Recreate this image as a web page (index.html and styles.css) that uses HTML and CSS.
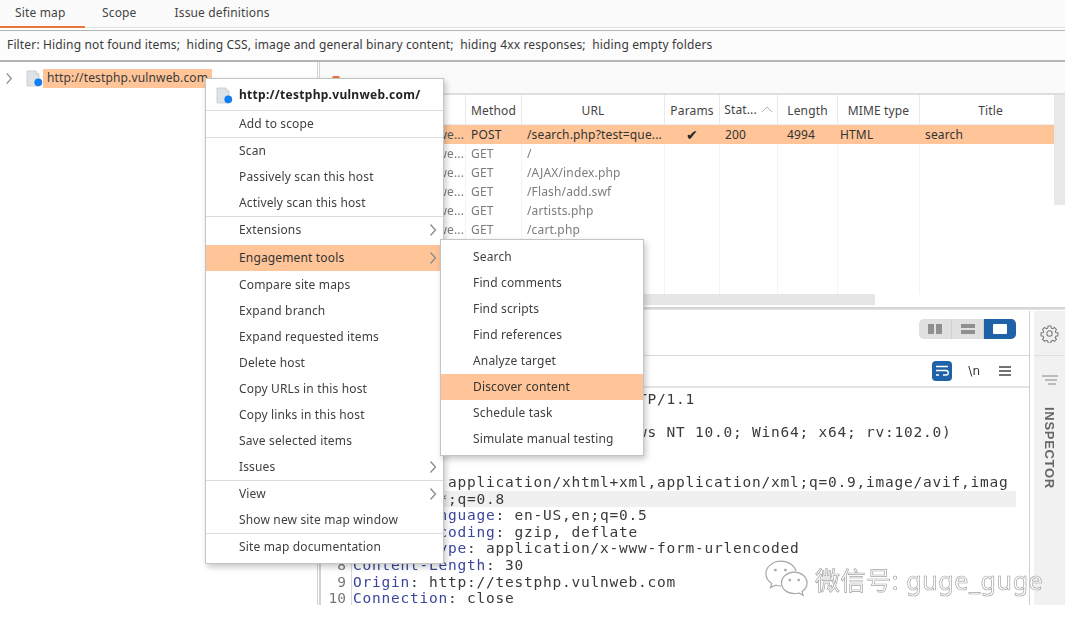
FILE: index.html
```html
<!DOCTYPE html>
<html lang="en">
<head>
<meta charset="utf-8">
<title>Site map</title>
<link rel="stylesheet" href="styles.css">
</head>
<body>
<svg class="defs" width="0" height="0" aria-hidden="true">
  <symbol id="site" viewBox="0 0 17 17">
    <path d="M1 1h9l3 3v12H1z" fill="#dfe3e6" stroke="#c4c8cc" stroke-width=".8"/>
    <path d="M10 1v3h3" fill="#f5f6f7" stroke="#c4c8cc" stroke-width=".8"/>
    <circle cx="12.3" cy="12.3" r="3.9" fill="#0f7ff2"/>
  </symbol>
  <symbol id="chev" viewBox="0 0 8 14">
    <path d="M1.5 1.5 6.5 7l-5 5.5" fill="none" stroke="#8a8a8a" stroke-width="1.3"/>
  </symbol>
</svg>
<div class="app">
  <nav class="tabs">
    <span class="tab active">Site map</span>
    <span class="tab">Scope</span>
    <span class="tab">Issue definitions</span>
  </nav>
  <div class="filter">Filter: Hiding not found items;&nbsp; hiding CSS, image and general binary content;&nbsp; hiding 4xx responses;&nbsp; hiding empty folders</div>
  <div class="main">
    <aside class="tree">
      <div class="tree-row">
        <svg class="tree-chev"><use href="#chev"/></svg>
        <svg class="site-icon"><use href="#site"/></svg>
        <span class="tree-label">http://testphp.vulnweb.com</span>
      </div>
    </aside>
    <section class="right">
      <div class="upper">
        <div class="subtabs"><span class="subtab-mark"></span></div>
        <div class="table-wrap">
          <div class="table">
            <div class="row head">
              <span class="th">Host</span><span class="th">Method</span><span class="th">URL</span><span class="th">Params</span>
              <span class="th th-sort">Stat...<svg class="sort" viewBox="0 0 12 7"><path d="M1 6l5-5 5 5" fill="none" stroke="#b5b5b5"/></svg></span>
              <span class="th">Length</span><span class="th">MIME type</span><span class="th">Title</span>
            </div>
            <div class="row sel"><span class="td host">http://testphp.vulnwe...</span><span class="td">POST</span><span class="td">/search.php?test=que...</span><span class="td check">✔</span><span class="td">200</span><span class="td">4994</span><span class="td">HTML</span><span class="td">search</span></div>
            <div class="row"><span class="td host">http://testphp.vulnwe...</span><span class="td">GET</span><span class="td">/</span><span class="td"></span><span class="td"></span><span class="td"></span><span class="td"></span><span class="td"></span></div>
            <div class="row"><span class="td host">http://testphp.vulnwe...</span><span class="td">GET</span><span class="td">/AJAX/index.php</span><span class="td"></span><span class="td"></span><span class="td"></span><span class="td"></span><span class="td"></span></div>
            <div class="row"><span class="td host">http://testphp.vulnwe...</span><span class="td">GET</span><span class="td">/Flash/add.swf</span><span class="td"></span><span class="td"></span><span class="td"></span><span class="td"></span><span class="td"></span></div>
            <div class="row"><span class="td host">http://testphp.vulnwe...</span><span class="td">GET</span><span class="td">/artists.php</span><span class="td"></span><span class="td"></span><span class="td"></span><span class="td"></span><span class="td"></span></div>
            <div class="row"><span class="td host">http://testphp.vulnwe...</span><span class="td">GET</span><span class="td">/cart.php</span><span class="td"></span><span class="td"></span><span class="td"></span><span class="td"></span><span class="td"></span></div>
            <div class="row filler"><span class="td"></span><span class="td"></span><span class="td"></span><span class="td"></span><span class="td"></span><span class="td"></span><span class="td"></span><span class="td"></span></div>
          </div>
          <div class="vscroll"><div class="vthumb"></div></div>
        </div>
        <div class="hscroll"><div class="hthumb"></div></div>
      </div>
      <div class="lower">
        <div class="editor">
          <div class="bar bar-top">
            <div class="layout-toggle">
              <span class="seg"><svg viewBox="0 0 14 10"><path d="M0 0h6v10H0zM8 0h6v10H8z" fill="#8f8f8f"/></svg></span>
              <span class="seg"><svg viewBox="0 0 14 10"><path d="M0 0h14v4H0zM0 6h14v4H0z" fill="#8f8f8f"/></svg></span>
              <span class="seg seg-on"><svg viewBox="0 0 14 10"><rect width="14" height="10" rx="1" fill="#fff"/></svg></span>
            </div>
          </div>
          <div class="bar bar-sub">
            <span class="wrap-btn"><svg viewBox="0 0 14 12"><path d="M1 1.500h12M1 5.500h10a2 2 0 0 1 0 4.500H8M1 10h3" fill="none" stroke="#fff" stroke-width="1.400"/></svg></span>
            <span class="nl">\n</span>
            <svg class="burger" viewBox="0 0 12 10"><path d="M0 1h12M0 5h12M0 9h12" stroke="#444" stroke-width="1.400"/></svg>
          </div>
          <div class="code">
            <div class="ln"><span class="no">1</span><span class="tx">POST /search.php?test=query HTTP/1.1</span></div>
            <div class="ln"><span class="no">2</span><span class="tx"><b>Host</b>: testphp.vulnweb.com</span></div>
            <div class="ln"><span class="no">3</span><span class="tx"><b>User-Agent</b>: Mozilla/5.0 (Windows NT 10.0; Win64; x64; rv:102.0)
Gecko/20100101 Firefox/102.0</span></div>
            <div class="ln"><span class="no">4</span><span class="tx"><b>Accept</b>:
text/html,application/xhtml+xml,application/xml;q=0.9,image/avif,imag
<i>e/webp,*/*;q=0.8</i></span></div>
            <div class="ln"><span class="no">5</span><span class="tx"><b>Accept-Language</b>: en-US,en;q=0.5</span></div>
            <div class="ln"><span class="no">6</span><span class="tx"><b>Accept-Encoding</b>: gzip, deflate</span></div>
            <div class="ln"><span class="no">7</span><span class="tx"><b>Content-Type</b>: application/x-www-form-urlencoded</span></div>
            <div class="ln"><span class="no">8</span><span class="tx"><b>Content-Length</b>: 30</span></div>
            <div class="ln"><span class="no">9</span><span class="tx"><b>Origin</b>: http://testphp.vulnweb.com</span></div>
            <div class="ln"><span class="no">10</span><span class="tx"><b>Connection</b>: close</span></div>
          </div>
        </div>
        <aside class="rail">
          <div class="rail-gear">
            <svg viewBox="0 0 24 24"><path d="M12 8.600a3.400 3.400 0 1 0 0 6.800 3.400 3.400 0 0 0 0-6.800zM10.200 2.500h3.600l.5 2.700 1.700.7 2.300-1.500 2.500 2.500-1.500 2.300.7 1.700 2.700.5v3.600l-2.700.5-.7 1.700 1.500 2.300-2.500 2.500-2.300-1.500-1.700.7-.5 2.700h-3.600l-.5-2.700-1.700-.7-2.300 1.500-2.500-2.500 1.500-2.300-.7-1.700-2.700-.5v-3.600l2.700-.5.7-1.700-1.500-2.300 2.500-2.500 2.300 1.500 1.700-.7z" fill="none" stroke="#777" stroke-width="1.300"/></svg>
          </div>
          <div class="rail-body">
            <svg class="rail-filter" viewBox="0 0 16 10"><path d="M0 1h16M3 5h12M6 9h8" stroke="#888" stroke-width="1.200"/></svg>
            <span class="rail-label">INSPECTOR</span>
          </div>
        </aside>
      </div>
    </section>
  </div>
</div>

<div class="menu menu-main">
  <div class="mi mi-title"><svg class="site-icon"><use href="#site"/></svg><b>http://testphp.vulnweb.com/</b></div>
  <div class="mi sep">Add to scope</div>
  <div class="mi">Scan</div>
  <div class="mi">Passively scan this host</div>
  <div class="mi sep">Actively scan this host</div>
  <div class="mi sub">Extensions<svg class="mi-chev"><use href="#chev"/></svg></div>
  <div class="mi hot gap sub">Engagement tools<svg class="mi-chev"><use href="#chev"/></svg></div>
  <div class="mi">Compare site maps</div>
  <div class="mi">Expand branch</div>
  <div class="mi">Expand requested items</div>
  <div class="mi">Delete host</div>
  <div class="mi">Copy URLs in this host</div>
  <div class="mi">Copy links in this host</div>
  <div class="mi">Save selected items</div>
  <div class="mi sep sub">Issues<svg class="mi-chev"><use href="#chev"/></svg></div>
  <div class="mi sub">View<svg class="mi-chev"><use href="#chev"/></svg></div>
  <div class="mi sep">Show new site map window</div>
  <div class="mi">Site map documentation</div>
</div>

<div class="menu menu-sub">
  <div class="mi">Search</div>
  <div class="mi">Find comments</div>
  <div class="mi">Find scripts</div>
  <div class="mi">Find references</div>
  <div class="mi">Analyze target</div>
  <div class="mi hot">Discover content</div>
  <div class="mi">Schedule task</div>
  <div class="mi">Simulate manual testing</div>
</div>

<div class="watermark">
  <svg class="wm-icon" viewBox="0 0 40 36"><path d="M15 2C7.500 2 1.500 7 1.500 13.200c0 3.600 2 6.700 5.200 8.800L5.500 26l4.600-2.400c1.500.4 3 .7 4.900.7M38.500 21.500c0-5.400-5.200-9.700-11.500-9.700s-11.500 4.300-11.500 9.700 5.200 9.700 11.500 9.700c1.400 0 2.800-.2 4-.6l4 2.100-1-3.500c2.700-1.800 4.500-4.600 4.500-7.700zM28.500 11C27.500 6 22 2 15 2" fill="none" stroke="#a9a9a9" stroke-width="1.100"/><circle cx="10" cy="10" r="1.300" fill="#a9a9a9"/><circle cx="19" cy="10" r="1.300" fill="#a9a9a9"/><circle cx="23" cy="19" r="1.200" fill="#a9a9a9"/><circle cx="31" cy="19" r="1.200" fill="#a9a9a9"/></svg>
  <span class="wm-text">微信号: guge_guge</span>
</div>
</body>
</html>
```
FILE: styles.css
```css
* { box-sizing: border-box; }
html, body { margin: 0; height: 100%; background: #fff; overflow: hidden; }
body { font-family: "Noto Sans", "Open Sans", sans-serif; font-size: 12px; color: #3a3a3a; letter-spacing: .15px; }
.defs { position: absolute; }
.app { width: 1065px; height: 605px; display: flex; flex-direction: column; filter: blur(.4px); }

.tabs { height: 28px; display: flex; border-bottom: 1px solid #e2e2e2; background: #fbfbfb; }
.tab { padding: 4px 17px 0 15px; height: 28px; line-height: 17px; color: #444; }
.tab:nth-child(2) { padding-left: 17px; padding-right: 23px; }
.tab.active { width: 85px; border-bottom: 2px solid #e9743c; }

.filter { margin-top: 2px; height: 32px; line-height: 28px; padding-left: 7px; border: solid #b4b4b4; border-width: 1px 0 2px; background: #fcfcfc; color: #3a3a3a; }

.main { flex: 1; display: flex; min-height: 0; }
.tree { width: 320px; border-right: 3px double #d2d2d2; padding-top: 7px; }
.tree-row { height: 19px; display: flex; align-items: center; }
.tree-chev { width: 8px; height: 13px; margin-left: 5px; }
.site-icon { width: 17px; height: 17px; flex: none; }
.tree-row .site-icon { margin-left: 13px; }
.tree-label { padding: 0 6px 0 4px; height: 19px; line-height: 18px; width: 169px; background: #ffc598; white-space: nowrap; }

.right { flex: 1; display: flex; flex-direction: column; min-width: 0; }
.upper { height: 247px; display: flex; flex-direction: column; border-bottom: 2px solid #d6d6d6; }
.subtabs { height: 33px; flex: none; background: #fafafa; border-bottom: 2px solid #dedede; position: relative; }
.subtab-mark { position: absolute; left: 12px; top: 14px; width: 8px; height: 3px; background: #e9743c; border-radius: 2px 2px 0 0; }
.table-wrap { height: 199px; flex: none; display: flex; }
.table { flex: 1; min-width: 0; overflow: hidden; }
.row { display: grid; grid-template-columns: 146px 56px 143px 55px 58px 60px 82px 142px; width: 742px; height: 19px; line-height: 20px; color: #7c7c7c; }
.head { height: 30px; line-height: 31px; color: #444; background: #fff; border-bottom: 1px solid #ececec; }
.th { text-align: center; border-right: 1px solid #e9e9e9; white-space: nowrap; overflow: hidden; }
.th-sort { display: flex; align-items: center; justify-content: center; gap: 4px; }
.sort { width: 12px; height: 7px; }
.td { padding-left: 5px; border-right: 1px solid #f4f4f4; white-space: nowrap; overflow: hidden; }
.td:nth-child(6) { padding-left: 9px; }
.td:nth-child(7) { padding-left: 2px; }
.host { text-align: right; padding-right: 1px; }
.sel { background: #ffc598; color: #333; }
.sel .td { border-right-color: transparent; }
.sel .host { color: #555; }
.td.check { text-align: center; font-family: "DejaVu Sans", sans-serif; font-size: 14px; color: #222; padding: 0; }
.filler { height: 60px; }
.vscroll { width: 11px; flex: none; background: #fff; }
.vthumb { height: 110px; background: #e8e8e8; }
.hscroll { flex: none; height: 12px; background: #fff; padding-left: 120px; }
.hthumb { width: 435px; height: 11px; background: #e6e6e6; }

.lower { flex: 1; display: flex; min-height: 0; border-top: 1px solid #e3e3e3; }
.editor { flex: 1; min-width: 0; display: flex; flex-direction: column; border-left: 1px solid #d4d4d4; }
.bar { display: flex; align-items: center; justify-content: flex-end; flex: none; }
.bar-top { height: 46px; border-bottom: 1px solid #d9d9d9; padding: 0 13px 7px 0; }
.layout-toggle { display: flex; height: 20px; width: 97px; border-radius: 5px; overflow: hidden; background: #e0e0e0; }
.seg { flex: 1; display: flex; align-items: center; justify-content: center; border-right: 1px solid #d2d2d2; }
.seg svg { width: 14px; height: 10px; }
.seg-on { background: #1f62a8; border: 0; }
.bar-sub { height: 32px; border-bottom: 2px solid #e4e4e4; padding: 0 18px 0 0; }
.wrap-btn { width: 20px; height: 20px; background: #1f62a8; border-radius: 4px; display: flex; align-items: center; justify-content: center; }
.wrap-btn svg { width: 14px; height: 12px; }
.nl { margin-left: 16px; font-family: "DejaVu Sans", sans-serif; font-size: 12px; color: #333; font-weight: 500; letter-spacing: 0; }
.burger { width: 12px; height: 10px; margin-left: 19px; }

.code { flex: 1; overflow: hidden; font-family: "DejaVu Sans Mono", monospace; font-size: 14.5px; line-height: 16.6px; letter-spacing: .77px; color: #3a3a3a; padding-top: 3px; }
.ln { display: flex; }
.no { width: 25px; flex: none; text-align: right; color: #777; letter-spacing: 0; }
.tx { margin-left: 5px; padding-left: 1px; border-left: 1px solid #d8d8d8; white-space: pre; flex: 1; }
.tx b { font-weight: 400; color: #3a479c; }
.tx i { font-style: normal; display: inline-block; width: 663px; background: #f0f0f0; }

.rail { width: 36px; flex: none; margin-top: 1px; padding-left: 4px; background: #f1f1f1; background-clip: content-box; border-left: 1px solid #cfcfcf; display: flex; flex-direction: column; align-items: center; }
.rail-gear { height: 45px; width: 100%; flex: none; border-bottom: 1px solid #dedede; display: flex; align-items: center; justify-content: center; }
.rail-gear svg { width: 19px; height: 19px; }
.rail-body { display: flex; flex-direction: column; align-items: center; padding-top: 19px; gap: 22px; }
.rail-filter { width: 16px; height: 10px; }
.rail-label { writing-mode: vertical-rl; font-family: "Liberation Sans", sans-serif; font-weight: 700; font-size: 13px; letter-spacing: .7px; color: #666; }

.menu { position: absolute; background: #fff; border: 1px solid #c4c4c4; box-shadow: 2px 3px 6px rgba(0,0,0,.22); letter-spacing: .15px; }
.menu-main { left: 205px; top: 78px; width: 239px; padding-bottom: 3px; }
.menu-sub { left: 440px; top: 239px; width: 204px; padding: 4px 0 3px; }
.mi { height: 26px; line-height: 25px; padding-left: 33px; white-space: nowrap; color: #3f3f3f; position: relative; }
.menu-sub .mi { padding-left: 32px; }
.mi.sep { height: 27px; border-bottom: 1px solid #dcdcdc; }
.mi.gap { margin: 2px 0 1px; }
.hot { background: #ffc598; color: #333; }
.mi-title { height: 32px; display: flex; align-items: center; padding: 1px 0 0 10px; gap: 6px; border-bottom: 1px solid #dcdcdc; line-height: 30px; }
.mi-title b { color: #222; font-weight: 700; letter-spacing: .28px; }
.mi-chev { position: absolute; right: 6px; top: 6px; width: 8px; height: 14px; }

.watermark { position: absolute; left: 764px; top: 559px; display: flex; align-items: center; gap: 6px; }
.wm-icon { width: 45px; height: 40px; flex: none; }
.wm-text { font-family: "Noto Sans", "Noto Sans CJK SC", sans-serif; font-size: 25px; letter-spacing: .6px; color: rgba(255,255,255,.75); -webkit-text-stroke: .7px #a4a4a4; white-space: nowrap; }
```
